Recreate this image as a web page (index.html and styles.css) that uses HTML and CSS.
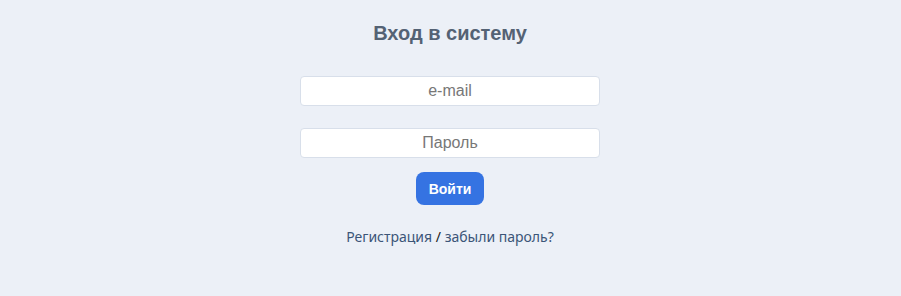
FILE: index.html
```html
<!DOCTYPE html>
<html lang="ru">
<head>
    <meta charset="UTF-8">
    <meta name="viewport" content="width=device-width, initial-scale=1.0">
    <title>Вход в систему</title>
    <link rel="stylesheet" href="styles.css">
</head>
<body>
    <div class="login">
        <h1>Вход в систему</h1>
        <form class="login-form">
            <input type="email" class="field" placeholder="e-mail">
            <input type="password" class="field" placeholder="Пароль">
            <button type="submit" class="login-button">Войти</button>
        </form>
        <p class="links"><a href="#">Регистрация</a> / <a href="#">забыли пароль?</a></p>
    </div>
</body>
</html>
```

FILE: styles.css
```css
body {
    margin: 0;
    padding: 0;
    background-color: #ecf0f7;
    font-family: "Liberation Sans", Arial, sans-serif;
}
.login {
    display: flex;
    flex-direction: column;
    align-items: center;
    padding-top: 22px;
    padding-right: 1px;
}
h1 {
    margin: 0;
    font-size: 20px;
    line-height: 23px;
    font-weight: bold;
    color: #546274;
}
.login-form {
    display: flex;
    flex-direction: column;
    align-items: center;
    margin-top: 31px;
}
.field {
    width: 300px;
    height: 30px;
    box-sizing: border-box;
    margin: 0 0 22px;
    padding: 0 8px;
    border: 1px solid #d8dfea;
    border-radius: 4px;
    background-color: white;
    font-family: "Liberation Sans", Arial, sans-serif;
    font-size: 16px;
    text-align: center;
    color: #333;
}
.field::placeholder {
    color: #777;
}
.field + .field {
    margin-bottom: 14px;
}
.login-button {
    width: 68px;
    height: 33px;
    padding: 0;
    border: none;
    border-radius: 8px;
    background-color: #3573e2;
    color: white;
    font-family: "Liberation Sans", Arial, sans-serif;
    font-size: 14px;
    font-weight: bold;
    cursor: pointer;
}
.links {
    margin: 22px 0 0;
    font-family: "Noto Sans", sans-serif;
    font-size: 14px;
    color: #222;
}
.links a {
    color: #3b5578;
    text-decoration: none;
}
```
